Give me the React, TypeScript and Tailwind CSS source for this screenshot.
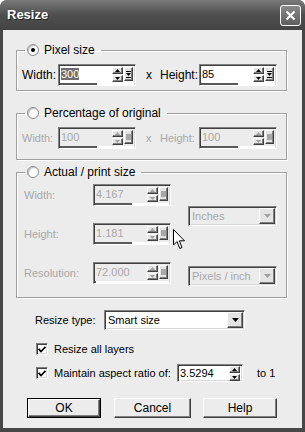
import React from 'react';

const sunken =
  'border border-t-[#808080] border-l-[#808080] border-b-white border-r-white shadow-[inset_1px_1px_0_#404040,inset_-1px_-1px_0_#d8d8d8]';
const raised =
  'border border-t-white border-l-white border-b-[#404040] border-r-[#404040] shadow-[inset_-1px_-1px_0_#808080] bg-[#e4e4e4]';
const groupBorder =
  'border border-[#a0a0a0] shadow-[1px_1px_0_#ffffff,inset_1px_1px_0_#ffffff]';

const Arrow: React.FC<{ up?: boolean; color: string }> = ({ up, color }) => (
  <svg width="5" height="3" viewBox="0 0 5 3">
    <path d={up ? 'M0 3 L5 3 L2.5 0 Z' : 'M0 0 L5 0 L2.5 3 Z'} fill={color} />
  </svg>
);

interface SpinBoxProps {
  value: string;
  disabled?: boolean;
  selected?: boolean;
  bar?: number;
  extra?: boolean;
  size?: string;
}

const SpinBox: React.FC<SpinBoxProps> = ({ value, disabled, selected, bar, extra = true, size = 'w-[78px] h-[22px]' }) => {
  const arrowColor = disabled ? '#a0a0a0' : '#000000';
  return (
    <div className={`flex ${size} flex-col ${sunken} ${disabled ? 'bg-[#ececec]' : 'bg-white'}`}>
      <div className="flex flex-1 items-center pl-[2px] pr-[2px]">
        <div className={`flex-1 text-[11px] leading-[14px] ${disabled ? 'text-[#a8a8a8]' : 'text-black'}`}>
          {selected ? <span className="bg-[#6e6e6e] text-white">{value}</span> : value}
        </div>
        <div className="flex flex-col gap-[1px]">
          <div className={`flex h-[7px] w-[11px] items-center justify-center ${raised}`}>
            <Arrow up color={arrowColor} />
          </div>
          <div className={`flex h-[7px] w-[11px] items-center justify-center ${raised}`}>
            <Arrow color={arrowColor} />
          </div>
        </div>
        {extra && (
          <div className={`ml-[1px] flex h-[14px] w-[9px] items-center justify-center ${raised}`}>
            {disabled ? (
              <div className="h-[6px] w-[5px] bg-[#a8a8a8]" />
            ) : (
              <svg width="5" height="7" viewBox="0 0 5 7">
                <path d="M0 0.5 H5 M0 6.5 H5" stroke="#000" strokeWidth="1" />
                <path d="M0 2 L5 2 L2.5 5 Z" fill="#000" />
              </svg>
            )}
          </div>
        )}
      </div>
      {bar !== undefined && (
        <div className="mx-[1px] h-[2px] bg-white">
          <div className="h-full bg-[#5a5a5a]" style={{ width: bar }} />
        </div>
      )}
    </div>
  );
};

const Dropdown: React.FC<{ value: string; disabled?: boolean; width: string }> = ({ value, disabled, width }) => (
  <div className={`flex ${width} h-[20px] items-center ${sunken} ${disabled ? 'bg-[#ececec]' : 'bg-white'} pl-[3px] pr-[1px]`}>
    <div className={`flex-1 whitespace-nowrap text-[11px] leading-[14px] ${disabled ? 'text-[#a8a8a8]' : 'text-black'}`}>{value}</div>
    <div className={`flex h-[16px] w-[16px] items-center justify-center ${raised}`}>
      <svg width="7" height="4" viewBox="0 0 7 4">
        <path d="M0 0 L7 0 L3.5 4 Z" fill={disabled ? '#a0a0a0' : '#000000'} />
      </svg>
    </div>
  </div>
);

const Radio: React.FC<{ checked?: boolean }> = ({ checked }) => (
  <div className="flex h-[12px] w-[12px] items-center justify-center rounded-full border border-[#8a8a8a] bg-white shadow-[inset_1px_1px_1px_#c0c0c0]">
    {checked && <div className="h-[4px] w-[4px] rounded-full bg-black" />}
  </div>
);

const Checkbox: React.FC = () => (
  <div className={`flex h-[12px] w-[12px] shrink-0 items-center justify-center bg-white ${sunken}`}>
    <svg width="8" height="7" viewBox="0 0 8 7">
      <path d="M0.5 3 L3 5.5 L7.5 0.8" stroke="#000" strokeWidth="1.8" fill="none" />
    </svg>
  </div>
);

const Legend: React.FC<{ label: string; checked?: boolean }> = ({ label, checked }) => (
  <legend className="ml-[8px] flex h-[14px] items-center gap-[5px] px-[2px] text-[12px] leading-[14px] text-black">
    <Radio checked={checked} />
    <span className="pr-[4px]">{label}</span>
  </legend>
);

const Button: React.FC<{ label: string; width: string; primary?: boolean }> = ({ label, width, primary }) => (
  <div className={`${width} h-[20px] ${primary ? 'border border-black' : ''}`}>
    <div className={`flex h-full w-full items-center justify-center text-[12px] text-black ${raised} bg-[#ececec]`}>
      {label}
    </div>
  </div>
);

export default function App() {
  return (
    <div className="flex h-[432px] w-[305px] flex-col overflow-hidden rounded-t-[7px] bg-[#474747] font-['Liberation_Sans',Arial,sans-serif]">
      <div className="flex h-[30px] items-center justify-between bg-gradient-to-b from-[#7a7a7a] via-[#4e4e4e] to-[#444444] pl-[7px] pr-[4px]">
        <span className="text-[13px] font-bold text-white [text-shadow:1px_1px_0_#222]">Resize</span>
        <div className="flex h-[21px] w-[21px] items-center justify-center rounded-[3px] border border-white bg-gradient-to-b from-[#8a8a8a] to-[#5e5e5e]">
          <svg width="11" height="11" viewBox="0 0 11 11">
            <path d="M1.5 1.5 L9.5 9.5 M9.5 1.5 L1.5 9.5" stroke="#fff" strokeWidth="2.2" />
          </svg>
        </div>
      </div>
      <div className="relative mx-[3px] mb-[4px] flex flex-1 flex-col bg-[#ececec] pt-[13px] text-[11px] text-black">
        {/* Pixel size */}
        <fieldset className={`ml-[13px] w-[271px] ${groupBorder} pb-[4px]`}>
          <Legend label="Pixel size" checked />
          <div className="mt-[7px] flex items-center pl-[5px]">
            <span className="w-[36px] text-[12px]">Width:</span>
            <SpinBox value="300" selected bar={37} />
            <span className="w-[24px] pl-[10px] text-[12px]">x</span>
            <span className="w-[39px] text-[12px]">Height:</span>
            <SpinBox value="85" bar={37} />
          </div>
        </fieldset>

        {/* Percentage of original */}
        <fieldset className={`ml-[13px] mt-[15px] w-[271px] ${groupBorder} pb-[10px] text-[#a8a8a8]`}>
          <Legend label="Percentage of original" />
          <div className="mt-[7px] flex items-center pl-[5px]">
            <span className="w-[36px]">Width:</span>
            <SpinBox value="100" disabled bar={37} />
            <span className="w-[24px] pl-[10px]">x</span>
            <span className="w-[39px]">Height:</span>
            <SpinBox value="100" disabled bar={37} />
          </div>
        </fieldset>

        {/* Actual / print size */}
        <fieldset className={`ml-[13px] mt-[5px] w-[271px] ${groupBorder} pb-[11px] text-[#a8a8a8]`}>
          <Legend label="Actual / print size" />
          <div className="mt-[5px] flex pl-[7px]">
            <div className="flex flex-col gap-[17px]">
              <div className="flex items-center">
                <span className="w-[69px]">Width:</span>
                <SpinBox value="4.167" disabled bar={37} />
              </div>
              <div className="flex items-center">
                <span className="w-[69px]">Height:</span>
                <SpinBox value="1.181" disabled bar={37} />
              </div>
              <div className="flex items-center">
                <span className="w-[69px]">Resolution:</span>
                <SpinBox value="72.000" disabled bar={1} />
              </div>
            </div>
            <div className="ml-[17px] flex flex-col pt-[22px]">
              <Dropdown value="Inches" disabled width="w-[89px]" />
              <div className="mt-[40px]">
                <Dropdown value="Pixels / inch" disabled width="w-[89px]" />
              </div>
            </div>
          </div>
        </fieldset>

        {/* Resize type */}
        <div className="mt-[12px] flex items-center pl-[32px]">
          <span className="w-[69px]">Resize type:</span>
          <Dropdown value="Smart size" width="w-[141px]" />
        </div>

        <div className="mt-[12px] flex h-[14px] items-center gap-[6px] pl-[33px]">
          <Checkbox />
          <span>Resize all layers</span>
        </div>

        <div className="mt-[8px] flex h-[18px] items-center pl-[33px]">
          <Checkbox />
          <span className="ml-[6px] w-[123px] whitespace-nowrap">Maintain aspect ratio of:</span>
          <SpinBox value="3.5294" extra={false} size="w-[66px] h-[18px]" />
          <span className="ml-[14px]">to 1</span>
        </div>

        <div className="mt-[16px] flex items-center pl-[24px]">
          <Button label="OK" width="w-[74px]" primary />
          <div className="ml-[13px]">
            <Button label="Cancel" width="w-[77px]" />
          </div>
          <div className="ml-[12px]">
            <Button label="Help" width="w-[74px]" />
          </div>
        </div>

        {/* mouse pointer */}
        <svg className="absolute left-[170px] top-[199px]" width="13" height="21" viewBox="0 0 13 21">
          <path d="M0.5 0.5 L0.5 16 L4 12.5 L6.8 19.5 L9 18.5 L6.3 11.8 L11.5 11.8 Z" fill="#fff" stroke="#000" strokeWidth="1" />
        </svg>
      </div>
    </div>
  );
}
